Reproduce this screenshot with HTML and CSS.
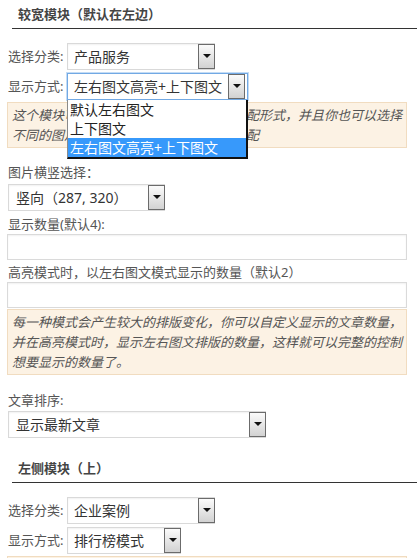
FILE: index.html
```html
<!DOCTYPE html>
<html lang="zh">
<head>
<meta charset="utf-8">
<link rel="stylesheet" href="styles.css">
</head>
<body>
<div class="wrap">
  <h3 class="title">较宽模块（默认在左边）</h3>
  <div class="row">
    <span class="lbl">选择分类:</span>
    <div class="sel w148"><span class="val">产品服务</span><span class="btn"><i></i></span></div>
  </div>
  <div class="row open">
    <span class="lbl">显示方式:</span>
    <div class="sel focus w182"><span class="val">左右图文高亮+上下图文</span><span class="btn"><i></i></span></div>
    <ul class="menu">
      <li>默认左右图文</li>
      <li>上下图文</li>
      <li class="on">左右图文高亮+上下图文</li>
    </ul>
  </div>
  <p class="note">这个模块可以提供三种不同的图文排版匹配形式，并且你也可以选择不同的图片尺寸比例来适应不同的排版匹配</p>

  <div class="flabel gap14">图片横竖选择：</div>
  <div class="sel solo w157 gap2"><span class="val v8">竖向（287, 320）</span><span class="btn"><i></i></span></div>

  <div class="flabel gap3">显示数量(默认4):</div>
  <div class="inp"></div>

  <div class="flabel gap2">高亮模式时，以左右图文模式显示的数量（默认2）</div>
  <div class="inp"></div>
  <p class="note gap1">每一种模式会产生较大的排版变化，你可以自定义显示的文章数量，并在高亮模式时，显示左右图文排版的数量，这样就可以完整的控制想要显示的数量了。</p>

  <div class="flabel gap15">文章排序:</div>
  <div class="sel solo w258 gap1"><span class="val v8">显示最新文章</span><span class="btn"><i></i></span></div>

  <h3 class="title second">左侧模块（上）</h3>
  <div class="row">
    <span class="lbl">选择分类:</span>
    <div class="sel w148"><span class="val">企业案例</span><span class="btn"><i></i></span></div>
  </div>
  <div class="row">
    <span class="lbl">显示方式:</span>
    <div class="sel w114"><span class="val">排行榜模式</span><span class="btn"><i></i></span></div>
  </div>
  <p class="note">这个模块可以选择不同的显示方式，排行榜模式会按照顺序显示文章标题。</p>
</div>
</body>
</html>
```

FILE: styles.css
```css
html, body {
  margin: 0;
  padding: 0;
  background: #fff;
}
body {
  font-family: "Noto Sans", "Noto Sans CJK SC", sans-serif;
  font-size: 13px;
  color: #555;
}
.wrap {
  width: 400px;
  padding-left: 7px;
}
.title {
  margin: 0 -10px 14px 5px;
  height: 28px;
  line-height: 28px;
  padding-left: 6px;
  border-bottom: 1px solid #333;
  font-size: 13px;
  font-weight: bold;
  color: #444;
}
.title.second {
  margin-top: 16px;
}
.row {
  display: flex;
  align-items: center;
  height: 27px;
}
.row + .row {
  margin-top: 3px;
}
.row.open {
  position: relative;
}
.lbl {
  width: 59px;
  margin-left: 1px;
  line-height: 27px;
  color: #555;
  white-space: nowrap;
}
.sel {
  box-sizing: border-box;
  height: 27px;
  border: 1px solid #d9d9d9;
  border-right: 0;
  background: #fff;
  display: flex;
  align-items: center;
  box-shadow: inset 0 1px 2px rgba(0, 0, 0, 0.06);
}
.sel.solo {
  margin-left: 1px;
}
.sel.focus {
  border: 1px solid #72a9e4;
  padding-right: 2px;
  box-shadow: 0 0 0 1px #c4dcf5;
}
.w148 { width: 148px; }
.w182 { width: 181px; }
.w157 { width: 157px; }
.w258 { width: 258px; }
.w114 { width: 114px; }
.val {
  flex: 1;
  padding-left: 6px;
  font-size: 14px;
  color: #333;
  white-space: nowrap;
  overflow: hidden;
  line-height: 25px;
}
.val.v8 {
  padding-left: 7px;
}
.btn {
  box-sizing: border-box;
  flex: 0 0 17px;
  height: 25px;
  border: 1px solid #6b6b6b;
  background: linear-gradient(#fbfbfb, #d2d2d2);
  display: flex;
  align-items: center;
  justify-content: center;
}
.btn i {
  display: block;
  width: 0;
  height: 0;
  border-left: 4px solid transparent;
  border-right: 4px solid transparent;
  border-top: 4px solid #111;
  margin-top: -1px;
}
.menu {
  position: absolute;
  left: 60px;
  top: 27px;
  z-index: 5;
  box-sizing: border-box;
  width: 181px;
  margin: 0;
  padding: 0;
  list-style: none;
  background: #fff;
  border-left: 1px solid #8a8a8a;
  border-right: 2px solid #111;
  border-bottom: 2px solid #111;
}
.menu li {
  height: 19px;
  line-height: 19px;
  padding-left: 2px;
  font-size: 14px;
  color: #222;
  white-space: nowrap;
}
.menu li.on {
  background: #3799fb;
  color: #fff;
}
.note {
  box-sizing: border-box;
  width: 400px;
  margin: 2px 0 0;
  padding: 2px 3px 2px 4px;
  border: 1px solid #f1dcc0;
  background: #fcf2e4;
  font-style: italic;
  line-height: 20px;
  font-size: 13px;
  color: #555;
}
.flabel {
  line-height: 20px;
  margin-left: 1px;
  color: #555;
  white-space: nowrap;
}
.inp {
  box-sizing: border-box;
  width: 400px;
  height: 26px;
  border: 1px solid #dadada;
  background: #fff;
  box-shadow: inset 0 1px 2px rgba(0, 0, 0, 0.06);
}
.gap1 { margin-top: 1px; }
.gap2 { margin-top: 2px; }
.gap3 { margin-top: 3px; }
.gap14 { margin-top: 14px; }
.gap15 { margin-top: 15px; }
```
